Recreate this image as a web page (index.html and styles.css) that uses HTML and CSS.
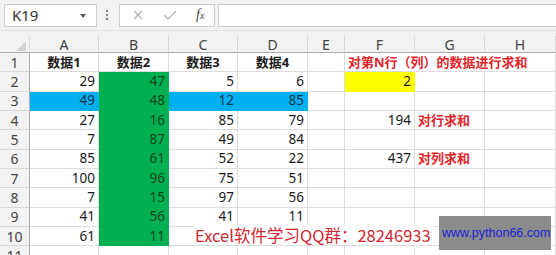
FILE: index.html
```
<!DOCTYPE html>
<html lang="zh-CN">
<head>
    <meta charset="UTF-8">
    <meta name="viewport" content="width=device-width, initial-scale=1.0">
    <title>对第N行（列）的数据进行求和</title>

    <link rel="stylesheet" href="styles.css">
</head>
<body>
    <div class="toolbar">
        <div class="namebox">K19<span class="caret"></span></div>
        <div class="dots">
            <svg width="4" height="12" viewBox="0 0 4 12"><circle cx="2" cy="2" r="1.2"/><circle cx="2" cy="6" r="1.2"/><circle cx="2" cy="10" r="1.2"/></svg>
        </div>
        <div class="fxbox">
            <svg class="cancel" width="10" height="10" viewBox="0 0 10 10"><path d="M1 1L9 9M9 1L1 9"/></svg>
            <svg class="enter" width="14" height="10" viewBox="0 0 14 10"><path d="M1 5L5 9L13 1"/></svg>
            <span class="fx">f<small>x</small></span>
        </div>
        <div class="formula"></div>
    </div>

    <div class="sheet">
        <div class="grid">
            <div class="corner"><span class="tri"></span></div><div class="hd">A</div><div class="hd">B</div><div class="hd">C</div><div class="hd">D</div><div class="hd">E</div><div class="hd">F</div><div class="hd">G</div><div class="hd">H</div>

            <div class="rh">1</div><div class="c b">数据1</div><div class="c b">数据2</div><div class="c b">数据3</div><div class="c b">数据4</div><div class="c"></div><div class="c red over">对第N行（列）的数据进行求和</div><div class="c over"></div><div class="c"></div>

            <div class="rh">2</div><div class="c n">29</div><div class="c n green">47</div><div class="c n">5</div><div class="c n">6</div><div class="c"></div><div class="c n yellow">2</div><div class="c"></div><div class="c"></div>

            <div class="rh">3</div><div class="c n blue">49</div><div class="c n green">48</div><div class="c n blue">12</div><div class="c n blue">85</div><div class="c"></div><div class="c"></div><div class="c"></div><div class="c"></div>

            <div class="rh">4</div><div class="c n">27</div><div class="c n green">16</div><div class="c n">85</div><div class="c n">79</div><div class="c"></div><div class="c n">194</div><div class="c red">对行求和</div><div class="c"></div>

            <div class="rh">5</div><div class="c n">7</div><div class="c n green">87</div><div class="c n">49</div><div class="c n">84</div><div class="c"></div><div class="c"></div><div class="c"></div><div class="c"></div>

            <div class="rh">6</div><div class="c n">85</div><div class="c n green">61</div><div class="c n">52</div><div class="c n">22</div><div class="c"></div><div class="c n">437</div><div class="c red">对列求和</div><div class="c"></div>

            <div class="rh">7</div><div class="c n">100</div><div class="c n green">96</div><div class="c n">75</div><div class="c n">51</div><div class="c"></div><div class="c"></div><div class="c"></div><div class="c"></div>

            <div class="rh">8</div><div class="c n">7</div><div class="c n green">15</div><div class="c n">97</div><div class="c n">56</div><div class="c"></div><div class="c"></div><div class="c"></div><div class="c"></div>

            <div class="rh">9</div><div class="c n">41</div><div class="c n green">56</div><div class="c n">41</div><div class="c n">11</div><div class="c"></div><div class="c"></div><div class="c"></div><div class="c"></div>

            <div class="rh">10</div><div class="c n">61</div><div class="c n green">11</div><div class="c n"></div><div class="c n"></div><div class="c"></div><div class="c"></div><div class="c"></div><div class="c"></div>

            <div class="rh">11</div><div class="c"></div><div class="c"></div><div class="c"></div><div class="c"></div><div class="c"></div><div class="c"></div><div class="c"></div><div class="c"></div>
        </div>

        <div class="note">Excel软件学习QQ群：28246933</div>
        <div class="mark">www.python66.com</div>
    </div>
</body>
</html>
```

FILE: styles.css
```
body {
    margin: 0;
    background-color: #f3f3f3;
    font-family: "Noto Sans", "Noto Sans CJK SC", sans-serif;
    color: #222;
    overflow: hidden;
}

/* formula bar */
.toolbar {
    display: flex;
    align-items: center;
    height: 30px;
    padding-left: 4px;
    border-bottom: 1px solid #e2e2e2;
}

.namebox {
    position: relative;
    box-sizing: border-box;
    width: 93px;
    height: 23px;
    padding-left: 7px;
    background-color: white;
    border: 1px solid #cfcfcf;
    font-size: 15px;
    line-height: 21px;
    color: #333;
}

.caret {
    position: absolute;
    right: 10px;
    top: 9px;
    border-left: 3px solid transparent;
    border-right: 3px solid transparent;
    border-top: 4px solid #555;
}

.dots {
    width: 18px;
    margin-left: 1px;
    display: flex;
    justify-content: center;
}

.dots svg {
    fill: #8a8a8a;
}

.fxbox {
    box-sizing: border-box;
    width: 96px;
    height: 23px;
    margin-left: 3px;
    display: flex;
    align-items: center;
    background-color: white;
    border: 1px solid #cfcfcf;
}

.fxbox svg {
    fill: none;
    stroke: #b5b5b5;
    stroke-width: 1.4;
}

.cancel {
    margin-left: 13px;
}

.enter {
    margin-left: 20px;
}

.fx {
    margin-left: 19px;
    font-family: "Liberation Serif", serif;
    font-style: italic;
    font-size: 14px;
    color: #444;
}

.fx small {
    font-size: 10px;
}

.formula {
    flex: 1;
    box-sizing: border-box;
    height: 23px;
    margin-left: 3px;
    background-color: white;
    border: 1px solid #cfcfcf;
    border-right: none;
}

/* sheet */
.sheet {
    position: relative;
    margin-top: 5px;
}

.grid {
    display: grid;
    grid-template-columns: 30px 69px 70px 69px 70px 37px 70px 70px 71px;
    grid-template-rows: 17px repeat(11, 19.33px);
    background-color: white;
}

.grid > div {
    box-sizing: border-box;
    display: flex;
    align-items: center;
    white-space: nowrap;
    line-height: 15px;
    border-right: 1px solid #dcdcdc;
    border-bottom: 1px solid #dcdcdc;
}

.corner {
    background-color: #f3f3f3;
    border-bottom-color: #ababab !important;
}

.tri {
    margin: 4px 0 0 16px;
    border-left: 10px solid transparent;
    border-bottom: 10px solid #d2d2d2;
}

.hd {
    justify-content: center;
    background-color: #f3f3f3;
    border-right-color: #d8d8d8 !important;
    border-bottom-color: #ababab !important;
    font-size: 14px;
    color: #444;
}

.rh {
    justify-content: center;
    background-color: #f3f3f3;
    border-right-color: #ababab !important;
    border-bottom-color: #d8d8d8 !important;
    font-size: 14px;
    color: #444;
}

.c {
    padding: 0 3px;
    font-size: 13.5px;
    color: #1a1a1a;
}

.n {
    justify-content: flex-end;
}

.b {
    justify-content: center;
    font-weight: bold;
    font-size: 13px;
}

.red {
    color: #e3252b;
    font-weight: bold;
    font-size: 13px;
}

.over {
    border-right-color: transparent !important;
}

.green {
    background-color: #00b050;
    border-color: #00b050 !important;
    color: #13461f;
}

.blue {
    background-color: #00b0f0;
    border-color: #00b0f0 !important;
    color: #0c3550;
}

.yellow {
    background-color: #ffff00;
    border-color: #ffff00 !important;
}

/* overlays on the picture */
.note {
    position: absolute;
    left: 193px;
    top: 189px;
    padding: 0 2px;
    background-color: white;
    font-family: "Noto Sans CJK SC", sans-serif;
    font-size: 16.5px;
    line-height: 20px;
    color: #d42630;
}

.mark {
    position: absolute;
    left: 439px;
    top: 180px;
    width: 112px;
    height: 34px;
    box-sizing: border-box;
    padding-left: 3px;
    background-color: #8b8b8b;
    font-family: "Liberation Sans", sans-serif;
    font-size: 12.5px;
    line-height: 34px;
    color: #1c22d8;
}
```
